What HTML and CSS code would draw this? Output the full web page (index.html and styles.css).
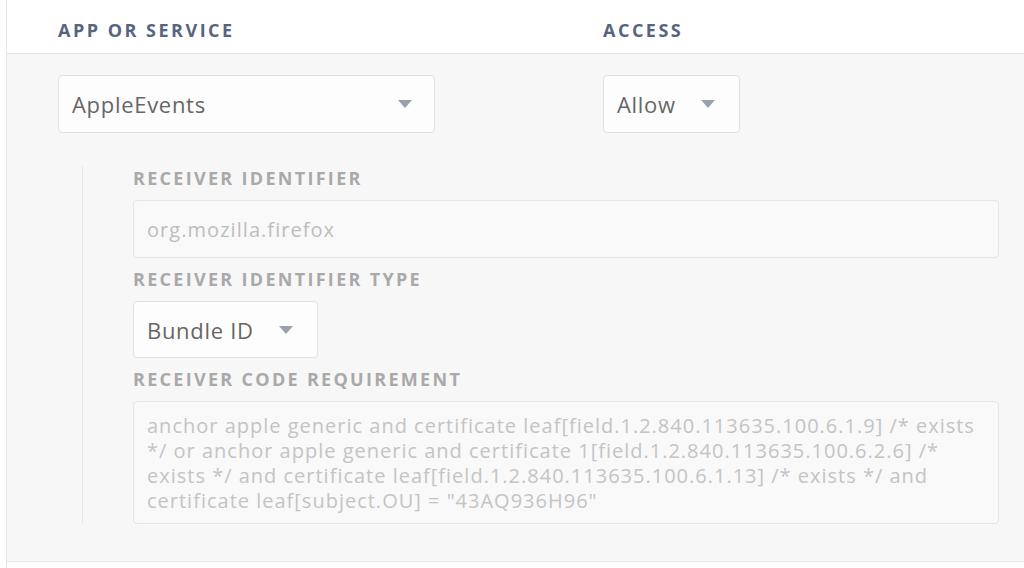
FILE: index.html
```html
<!DOCTYPE html>
<html>
<head>
<meta charset="utf-8">
<link rel="stylesheet" href="styles.css">
</head>
<body>
<div class="panel">
  <div class="header">
    <div class="col-app">APP OR SERVICE</div>
    <div class="col-access">ACCESS</div>
  </div>
  <div class="body">
    <div class="row">
      <div class="col-app">
        <div class="select select-app"><span>AppleEvents</span><i class="caret"></i></div>
      </div>
      <div class="col-access">
        <div class="select select-access"><span>Allow</span><i class="caret"></i></div>
      </div>
    </div>
    <div class="nested">
      <div class="field-label">RECEIVER IDENTIFIER</div>
      <div class="input">org.mozilla.firefox</div>
      <div class="field-label">RECEIVER IDENTIFIER TYPE</div>
      <div class="select select-type"><span>Bundle ID</span><i class="caret"></i></div>
      <div class="field-label">RECEIVER CODE REQUIREMENT</div>
      <div class="textarea">anchor apple generic and certificate leaf[field.1.2.840.113635.100.6.1.9] /* exists<br>*/ or anchor apple generic and certificate 1[field.1.2.840.113635.100.6.2.6] /*<br>exists */ and certificate leaf[field.1.2.840.113635.100.6.1.13] /* exists */ and<br>certificate leaf[subject.OU] = "43AQ936H96"</div>
    </div>
  </div>
</div>
</body>
</html>
```
FILE: styles.css
```css
html, body {
  margin: 0;
  padding: 0;
  background: #ffffff;
  font-family: "Open Sans", "Liberation Sans", sans-serif;
}
.panel {
  margin-left: 6px;
  border-left: 1px solid #e4e7ec;
  min-height: 568px;
}
.header {
  display: flex;
  box-sizing: border-box;
  height: 54px;
  border-bottom: 1px solid #e3e6eb;
  padding-left: 51px;
  padding-top: 19px;
  font-size: 18px;
  line-height: 22px;
  font-weight: 700;
  letter-spacing: 2.5px;
  color: #56657f;
}
.col-app {
  width: 545px;
}
.body {
  box-sizing: border-box;
  background: #f7f7f7;
  padding: 21px 25px 0 51px;
  border-bottom: 1px solid #e3e6eb;
  height: 508px;
}
.row {
  display: flex;
}
.select {
  box-sizing: border-box;
  height: 58px;
  border: 1px solid #dde0e6;
  border-radius: 4px;
  background: #fdfdfd;
  display: flex;
  align-items: center;
  justify-content: space-between;
  padding: 0 22px 0 13px;
  font-size: 22px;
  letter-spacing: 0.7px;
  color: #666666;
}
.select-app { width: 377px; }
.select-access { width: 137px; padding-right: 24px; }
.select-type { width: 185px; height: 57px; padding-right: 24px; }
.caret {
  width: 0;
  height: 0;
  border-left: 7px solid transparent;
  border-right: 7px solid transparent;
  border-top: 8px solid #9aa1ad;
}
.nested {
  margin-top: 33px;
  margin-left: 24px;
  border-left: 1px solid #e4e7ec;
  padding-left: 50px;
}
.field-label {
  font-size: 18px;
  font-weight: 700;
  letter-spacing: 2.3px;
  color: #a9a9a9;
  line-height: 20px;
  padding: 2px 0 12px;
}
.input {
  box-sizing: border-box;
  height: 58px;
  border: 1px solid #e3e5e9;
  border-radius: 4px;
  background: #f9f9f9;
  display: flex;
  align-items: center;
  padding: 0 13px;
  font-size: 20px;
  letter-spacing: 1.05px;
  color: #bdbdbd;
  margin-bottom: 9px;
}
.select-type { margin-bottom: 9px; }
.textarea {
  box-sizing: border-box;
  border: 1px solid #e3e5e9;
  border-radius: 4px;
  background: #f9f9f9;
  padding: 11px 13px 10px;
  font-size: 20px;
  letter-spacing: 1px;
  line-height: 25px;
  color: #c4c4c4;
  white-space: nowrap;
}
```
